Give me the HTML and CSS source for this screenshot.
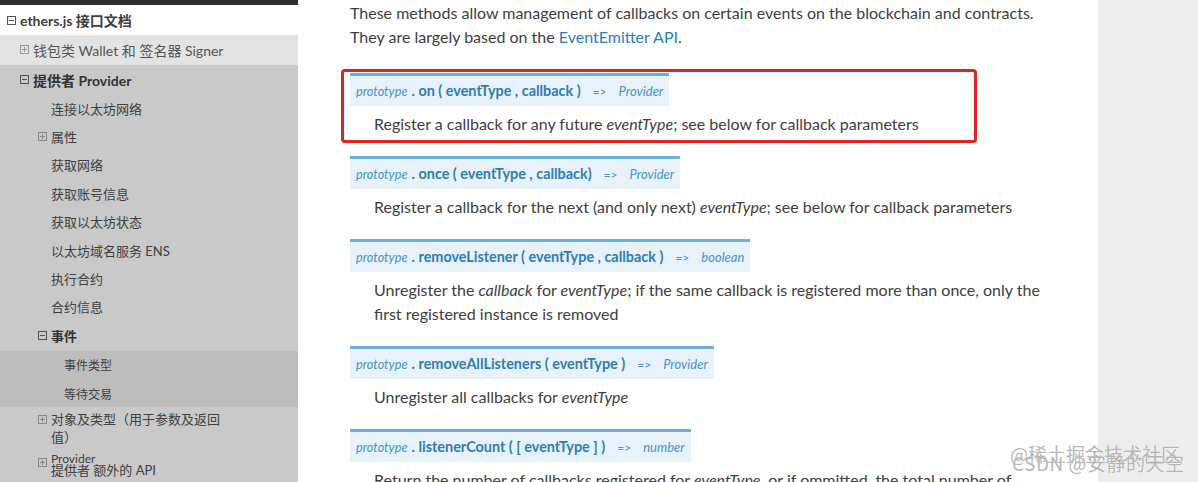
FILE: index.html
```html
<!DOCTYPE html>
<html>
<head>
<meta charset="utf-8">
<link rel="stylesheet" href="styles.css">
</head>
<body>
<div class="page">
  <nav class="sidebar">
    <div class="topbar"></div>
    <div class="nav-root"><svg class="tg" viewBox="0 0 9 9"><rect x="0.5" y="0.5" width="8" height="8" fill="none" stroke="#555"/><path d="M2 4.5h5" stroke="#555"/></svg>ethers.js 接口文档</div>
    <div class="nav-l1 wallet"><svg class="tg" viewBox="0 0 9 9"><rect x="0.5" y="0.5" width="8" height="8" fill="none" stroke="#999"/><path d="M2 4.5h5M4.5 2v5" stroke="#999"/></svg>钱包类 Wallet 和 签名器 Signer</div>
    <div class="nav-l1 strong"><svg class="tg" viewBox="0 0 9 9"><rect x="0.5" y="0.5" width="8" height="8" fill="none" stroke="#555"/><path d="M2 4.5h5" stroke="#555"/></svg>提供者 Provider</div>
    <div class="nav-l2">连接以太坊网络</div>
    <div class="nav-l2 has-tg"><svg class="tg" viewBox="0 0 9 9"><rect x="0.5" y="0.5" width="8" height="8" fill="none" stroke="#888"/><path d="M2 4.5h5M4.5 2v5" stroke="#888"/></svg>属性</div>
    <div class="nav-l2">获取网络</div>
    <div class="nav-l2">获取账号信息</div>
    <div class="nav-l2">获取以太坊状态</div>
    <div class="nav-l2">以太坊域名服务 ENS</div>
    <div class="nav-l2">执行合约</div>
    <div class="nav-l2">合约信息</div>
    <div class="nav-l2 has-tg strong"><svg class="tg" viewBox="0 0 9 9"><rect x="0.5" y="0.5" width="8" height="8" fill="none" stroke="#555"/><path d="M2 4.5h5" stroke="#555"/></svg>事件</div>
    <div class="nav-group">
      <div class="nav-l3">事件类型</div>
      <div class="nav-l3">等待交易</div>
    </div>
    <div class="nav-l2 has-tg multi"><svg class="tg" viewBox="0 0 9 9"><rect x="0.5" y="0.5" width="8" height="8" fill="none" stroke="#888"/><path d="M2 4.5h5M4.5 2v5" stroke="#888"/></svg><span class="wrap">对象及类型（用于参数及返回值）</span></div>
    <div class="nav-l2 has-tg stacked"><svg class="tg" viewBox="0 0 9 9"><rect x="0.5" y="0.5" width="8" height="8" fill="none" stroke="#888"/><path d="M2 4.5h5M4.5 2v5" stroke="#888"/></svg><span class="stack"><span class="small">Provider</span><span>提供者 额外的 API</span></span></div>
  </nav>
  <main class="content">
    <p class="intro">These methods allow management of callbacks on certain events on the blockchain and contracts. They are largely based on the <a class="link">EventEmitter API</a>.</p>

    <div class="sig"><em class="proto">prototype</em> <strong>. on ( eventType , callback )</strong><span class="arrow">=&gt;</span><em class="ret">Provider</em></div>
    <p class="desc">Register a callback for any future <em>eventType</em>; see below for callback parameters</p>

    <div class="sig"><em class="proto">prototype</em> <strong>. once ( eventType , callback)</strong><span class="arrow">=&gt;</span><em class="ret">Provider</em></div>
    <p class="desc">Register a callback for the next (and only next) <em>eventType</em>; see below for callback parameters</p>

    <div class="sig"><em class="proto">prototype</em> <strong>. removeListener ( eventType , callback )</strong><span class="arrow">=&gt;</span><em class="ret">boolean</em></div>
    <p class="desc">Unregister the <em>callback</em> for <em>eventType</em>; if the same callback is registered more than once, only the first registered instance is removed</p>

    <div class="sig"><em class="proto">prototype</em> <strong>. removeAllListeners ( eventType )</strong><span class="arrow">=&gt;</span><em class="ret">Provider</em></div>
    <p class="desc">Unregister all callbacks for <em>eventType</em></p>

    <div class="sig"><em class="proto">prototype</em> <strong>. listenerCount ( [ eventType ] )</strong><span class="arrow">=&gt;</span><em class="ret">number</em></div>
    <p class="desc">Return the number of callbacks registered for <em>eventType</em>, or if ommitted, the total number of callbacks registered</p>

    <div class="annot"></div>
  </main>
  <aside class="gutter"></aside>
  <div class="watermark">
    <span class="wm1">@稀土掘金技术社区</span>
    <span class="wm2">CSDN @安静的天空</span>
  </div>
</div>
</body>
</html>
```

FILE: styles.css
```css
html, body {
  margin: 0;
  padding: 0;
}
body {
  font-family: "Lato", "Noto Sans CJK SC", sans-serif;
  background: #fff;
}
.page {
  position: relative;
  display: flex;
  width: 1198px;
  height: 482px;
  overflow: hidden;
}
.sidebar {
  width: 298px;
  flex: none;
  background: #c9c9c9;
  display: flex;
  flex-direction: column;
  color: #404040;
  font-size: 13px;
}
.topbar {
  height: 5px;
  background: #2d2d2d;
}
.tg {
  width: 9px;
  height: 9px;
  flex: none;
  margin-right: 4px;
}
.nav-root {
  height: 30px;
  background: #fff;
  display: flex;
  align-items: center;
  padding-left: 7px;
  font-size: 14px;
  font-weight: 700;
  color: #404040;
}
.nav-l1 {
  height: 30px;
  display: flex;
  align-items: center;
  padding-left: 20px;
  padding-bottom: 1px;
  box-sizing: border-box;
  font-size: 14px;
  color: #404040;
}
.nav-l1.wallet {
  background: #e3e3e3;
  color: #555;
}
.strong {
  font-weight: 700;
  color: #333;
}
.nav-l2 {
  height: 28.4px;
  display: flex;
  align-items: center;
  padding-left: 51px;
  padding-bottom: 2px;
  box-sizing: border-box;
}
.nav-l2.has-tg {
  padding-left: 38px;
}
.nav-group {
  background: #bdbdbd;
}
.nav-l3 {
  height: 28.4px;
  display: flex;
  align-items: center;
  padding-left: 64px;
  font-size: 12px;
}
.nav-l2.multi {
  height: auto;
  align-items: flex-start;
  padding-top: 3px;
  padding-bottom: 2px;
  line-height: 18px;
}
.nav-l2.multi .tg,
.nav-l2.stacked .tg {
  margin-top: 5px;
}
.wrap {
  width: 172px;
}
.nav-l2.stacked {
  height: auto;
  align-items: flex-start;
  padding-top: 5px;
}
.stack {
  display: flex;
  flex-direction: column;
}
.stack .small {
  font-size: 12px;
  line-height: 9px;
  padding-top: 1px;
}
.stack span:last-child {
  line-height: 15px;
}

.content {
  position: relative;
  width: 800px;
  flex: none;
  box-sizing: border-box;
  padding: 1px 52px 0 52px;
  background: #fff;
  color: #404040;
  font-size: 16px;
}
.intro {
  margin: 0 0 24px 0;
  line-height: 24px;
}
.link {
  color: #2980b9;
}
.sig {
  width: fit-content;
  box-sizing: border-box;
  height: 33px;
  line-height: 28px;
  padding: 0 6px 2px 6px;
  border-top: 3px solid #6ab0de;
  background: #e7f2fa;
  color: #2980b9;
  white-space: nowrap;
}
.sig strong {
  font-size: 14.4px;
  font-weight: 700;
  color: #2f7db5;
}
.sig .proto {
  font-size: 12.7px;
  color: #4a92c8;
}
.sig .ret {
  font-size: 13px;
  color: #4a92c8;
}
.sig .arrow {
  font-size: 12px;
  margin: 0 12px;
  color: #4a92c8;
}
.desc {
  margin: 6px 0 20px 24px;
  line-height: 24px;
}
.annot {
  position: absolute;
  left: 43px;
  top: 69px;
  width: 636px;
  height: 74px;
  box-sizing: border-box;
  border: 3px solid #e3241b;
  border-radius: 4px;
}
.gutter {
  flex: 1;
  background: #ededed;
}
.watermark {
  position: absolute;
  left: 1012px;
  top: 440px;
  width: 186px;
  height: 42px;
  font-family: "Noto Sans CJK SC", sans-serif;
  font-size: 19px;
  color: rgba(120, 120, 120, 0.55);
  text-shadow: 0 0 1px #fff;
}
.wm1 {
  position: absolute;
  left: -2px;
  top: 0;
  white-space: nowrap;
}
.wm2 {
  position: absolute;
  left: 0;
  top: 9px;
  white-space: nowrap;
  letter-spacing: 0.5px;
}
```
